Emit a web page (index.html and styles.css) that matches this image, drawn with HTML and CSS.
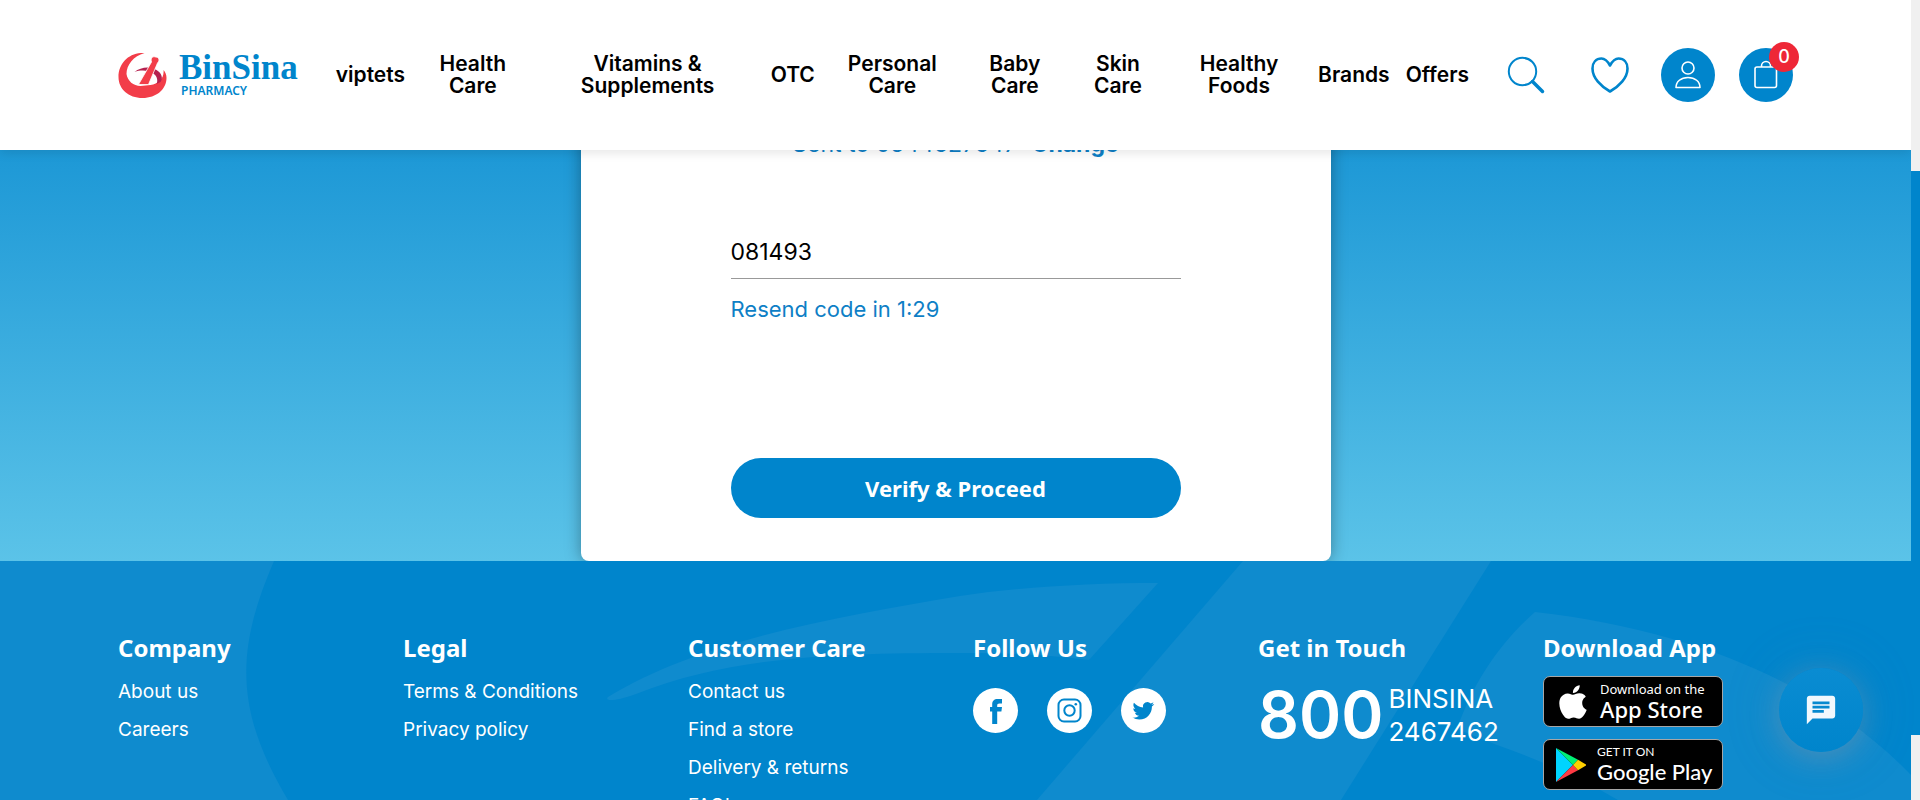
FILE: index.html
```html
<!DOCTYPE html>
<html lang="en">
<head>
<meta charset="utf-8">
<meta name="viewport" content="width=device-width, initial-scale=1">
<title>BinSina Pharmacy</title>
<link rel="stylesheet" href="styles.css">
</head>
<body>
<div class="page">
  <header class="header">
    <a class="logo" href="#">
      <svg class="logo-mark" viewBox="0 0 48 45" aria-hidden="true">
        <path fill="#f23d49" d="M26 0C11-1 0 10 0 24c0 12 10 21 24 21s24-9 24-20c0-3-1-6-3-8 1 8-5 14-13 15l-10 1C15 33 9 28 8 21 8 12 15 3 26 0z"/>
        <path fill="#b5214f" d="M16 19c6-5 16-6 22-2 5 3 7 8 4 12l-4 2c2-4 0-9-4-11-5-3-12-3-18-1z"/>
        <path fill="#f23d49" stroke="#fff" stroke-width=".8" d="M33 9c-1-4 1-6 4-5 3 0 5 3 2 6L30 31.500h-10z"/>
      </svg>
      <span class="logo-text"><span class="logo-name">BinSina</span><span class="logo-sub">PHARMACY</span></span>
    </a>
    <nav class="nav">
      <a href="#">viptets</a>
      <a href="#">Health Care</a>
      <a href="#">Vitamins &amp; Supplements</a>
      <a href="#">OTC</a>
      <a href="#">Personal Care</a>
      <a href="#">Baby Care</a>
      <a href="#">Skin Care</a>
      <a href="#">Healthy Foods</a>
      <a href="#">Brands</a>
      <a href="#">Offers</a>
    </nav>
    <div class="tools">
      <button class="tool tool-search" type="button" aria-label="Search">
        <svg width="38" height="38" viewBox="0 0 38 38" fill="none" stroke="#0085cc"><circle cx="15.500" cy="15.500" r="13.700" stroke-width="2"/><path d="M25.500 25.500L35.500 35.500" stroke-width="3.500" stroke-linecap="round"/></svg>
      </button>
      <button class="tool" type="button" aria-label="Wishlist">
        <svg width="38" height="36" viewBox="0 0 38 36" fill="none" stroke="#0085cc" stroke-width="2.600" stroke-linejoin="round"><path d="M19 8.500C16.500 4 13.500 1.500 10.500 1.500 5 1.500 1.500 5.500 1.500 11.500 1.500 21 10 29.500 19 34.500 28 29.500 36.500 21 36.500 11.500 36.500 5.500 33 1.500 27.500 1.500 24.500 1.500 21.500 4 19 8.500z"/></svg>
      </button>
      <button class="tool tool-round" type="button" aria-label="Account">
        <svg width="28" height="30" viewBox="0 0 28 30" fill="none" stroke="#fff" stroke-width="1.600" stroke-linejoin="round"><circle cx="14" cy="8" r="6"/><path d="M2 27.500C2 21.500 7 17.500 14 17.500S26 21.500 26 27.500z"/></svg>
      </button>
      <button class="tool tool-round" type="button" aria-label="Cart">
        <svg width="28" height="30" viewBox="0 0 28 30" fill="none" stroke="#fff" stroke-width="1.600"><rect x="3" y="7" width="21.500" height="20.500" rx="2"/><path d="M9.500 7V6a4.500 4.500 0 0 1 9 0v1"/></svg>
        <span class="badge">0</span>
      </button>
    </div>
  </header>

  <main class="main">
    <form class="card">
      <p class="sent">Sent to 0544627647 <a href="#">Change</a></p>
      <input class="code" type="text" value="081493" aria-label="Verification code">
      <p class="resend">Resend code in 1:29</p>
      <button class="submit" type="button">Verify &amp; Proceed</button>
    </form>
  </main>

  <footer class="footer">
    <svg class="pattern" viewBox="0 0 1911 239" preserveAspectRatio="none" fill="#0f8bce" aria-hidden="true">
      <path d="M0 0H274C235 90 235 150 288 239H0z"/>
      <path d="M608 136C604 140 614 141 636 133 730 96 830 92 960 92 1010 92 1050 94 1089 99L1158 22C1090 22 1020 26 960 35 830 57 700 80 608 136z"/>
      <path d="M1243 0H1491L1341 239H1037z"/>
      <path d="M1535 51C1500 82 1474 120 1457 168L1497 184C1540 199 1580 217 1618 239H1911V214C1840 140 1720 72 1535 51z"/>
    </svg>
    <div class="columns">
      <section>
        <h2>Company</h2>
        <ul><li><a href="#">About us</a></li><li><a href="#">Careers</a></li></ul>
      </section>
      <section>
        <h2>Legal</h2>
        <ul><li><a href="#">Terms &amp; Conditions</a></li><li><a href="#">Privacy policy</a></li></ul>
      </section>
      <section>
        <h2>Customer Care</h2>
        <ul><li><a href="#">Contact us</a></li><li><a href="#">Find a store</a></li><li><a href="#">Delivery &amp; returns</a></li><li><a href="#">FAQ's</a></li></ul>
      </section>
      <section>
        <h2>Follow Us</h2>
        <div class="social">
          <a href="#" aria-label="Facebook"><svg viewBox="0 0 45 45"><path fill="#0085cc" d="M29 11v4.500h-2.500c-1.800 0-2.300.8-2.300 2.200V19H29l-.6 4.500h-4.200V36h-5V23.500H17V19h2.200v-2.500c0-3.600 1.800-5.500 5.600-5.500z"/></svg></a>
          <a href="#" aria-label="Instagram"><svg viewBox="0 0 45 45" fill="none" stroke="#0085cc" stroke-width="2"><rect x="11.500" y="11.500" width="22" height="22" rx="5.500"/><circle cx="22.500" cy="22.500" r="5.200"/><circle cx="28.800" cy="16.200" r="1.300" fill="#0085cc" stroke="none"/></svg></a>
          <a href="#" aria-label="Twitter"><svg viewBox="0 0 45 45"><path transform="translate(11.500 12) scale(.9)" fill="#0085cc" d="M23.953 4.570a10 10 0 01-2.825.775 4.958 4.958 0 002.163-2.723c-.951.555-2.005.959-3.127 1.184a4.920 4.920 0 00-8.384 4.482C7.690 8.095 4.067 6.130 1.640 3.162a4.822 4.822 0 00-.666 2.475c0 1.710.870 3.213 2.188 4.096a4.904 4.904 0 01-2.228-.616v.060a4.923 4.923 0 003.946 4.827 4.996 4.996 0 01-2.212.085 4.936 4.936 0 004.604 3.417 9.867 9.867 0 01-6.102 2.105c-.390 0-.779-.023-1.170-.067a13.995 13.995 0 007.557 2.209c9.053 0 13.998-7.496 13.998-13.985 0-.210 0-.420-.015-.630A9.935 9.935 0 0024 4.590z"/></svg></a>
        </div>
      </section>
      <section>
        <h2>Get in Touch</h2>
        <a class="phone" href="#"><span class="phone-code">800</span><span class="phone-rest">BINSINA<br>2467462</span></a>
      </section>
      <section>
        <h2>Download App</h2>
        <div class="stores">
          <a class="store store-apple" href="#">
            <svg width="28" height="34" viewBox="2 0 20 24" aria-hidden="true"><path fill="#fff" d="M12.152 6.896c-.948 0-2.415-1.078-3.960-1.040-2.040.027-3.910 1.183-4.961 3.014-2.117 3.675-.546 9.103 1.519 12.090 1.013 1.454 2.208 3.090 3.792 3.039 1.520-.065 2.090-.987 3.935-.987 1.831 0 2.350.987 3.960.948 1.637-.026 2.676-1.480 3.676-2.948 1.156-1.688 1.636-3.325 1.662-3.415-.039-.013-3.182-1.221-3.220-4.857-.026-3.040 2.480-4.494 2.597-4.559-1.429-2.090-3.623-2.324-4.390-2.376-2-.156-3.675 1.090-4.610 1.090zM15.530 3.830c.843-1.012 1.400-2.427 1.245-3.830-1.207.052-2.662.805-3.532 1.818-.780.896-1.454 2.338-1.273 3.714 1.338.104 2.715-.688 3.559-1.701"/></svg>
            <span class="store-text"><small>Download on the</small><b>App Store</b></span>
          </a>
          <a class="store store-google" href="#">
            <svg width="32" height="34" viewBox="0 0 32 34" aria-hidden="true"><path fill="#00d4ff" d="M1 0v34l17-17z"/><path fill="#00f076" d="M1 0l17 17 5-5.200z"/><path fill="#ff3a44" d="M1 34l17-17 5 5.200z"/><path fill="#ffcf00" d="M23 11.800L31 16.500v1l-8 4.700-5-5.200z"/></svg>
            <span class="store-text"><small>GET IT ON</small><b>Google Play</b></span>
          </a>
        </div>
      </section>
    </div>
  </footer>
</div>
<div class="scrollbar" aria-hidden="true"><div class="thumb"></div></div>
<button class="chat" type="button" aria-label="Chat">
  <svg width="34" height="34" viewBox="0 0 24 24" aria-hidden="true"><path fill="#f1f8fd" d="M20 2H4c-1.100 0-1.990.9-1.990 2L2 22l4-4h14c1.100 0 2-.9 2-2V4c0-1.100-.9-2-2-2zM6 9h12v2H6V9zm8 5H6v-2h8v2zm4-6H6V6h12v2z"/></svg>
</button>
</body>
</html>
```

FILE: styles.css
```css
* { box-sizing: border-box; }

body {
  margin: 0;
  display: flex;
  height: 100vh;
  overflow: hidden;
  font-family: Inter, "Liberation Sans", sans-serif;
  color: #000;
}

a { color: inherit; text-decoration: none; }
button { border: 0; padding: 0; background: none; cursor: pointer; font: inherit; }
h2, p, ul { margin: 0; padding: 0; }
ul { list-style: none; }

.page {
  flex: 1;
  min-width: 0;
  display: flex;
  flex-direction: column;
  overflow: hidden;
}

/* Header */
.header {
  position: relative;
  z-index: 2;
  flex: none;
  display: flex;
  align-items: center;
  min-height: 150px;
  padding: 0 118px;
  background: #fff;
  box-shadow: 0 3px 10px rgba(0, 0, 0, .1);
}
.logo { flex: none; display: flex; gap: 12px; align-items: center; margin-right: 38px; color: #0085cc; }
.logo-mark { width: 49px; height: 45px; }
.logo-text { display: flex; flex-direction: column; }
.logo-name { font: bold 35px/32px "Liberation Serif", serif; }
.logo-sub { font: 600 12px/14px "Noto Sans", sans-serif; padding-left: 2px; }

.nav {
  flex: 1;
  min-width: 0;
  display: flex;
  align-items: center;
  gap: 16px;
  font-size: 21px;
  font-weight: 600;
  line-height: 22px;
  text-align: center;
}

.tools { flex: none; display: flex; align-items: center; gap: 24px; margin-left: 24px; }
.tool {
  position: relative;
  width: 54px;
  height: 54px;
  display: flex;
  align-items: center;
  justify-content: center;
}
.tool-search { width: 66px; }
.tool-round { border-radius: 50%; background: #0085cc; }
.badge {
  position: absolute;
  top: -6px;
  right: -6px;
  width: 30px;
  height: 30px;
  border-radius: 50%;
  background: #ee2737;
  color: #fff;
  font-size: 18px;
  font-weight: 500;
  line-height: 30px;
}

/* Verification card */
.main {
  flex: none;
  display: flex;
  justify-content: center;
  background: linear-gradient(#1d98d6, #5bc3e8);
}
.card {
  width: 750px;
  margin-top: -20px;
  padding: 0 150px 43px;
  border-radius: 8px;
  background: #fff;
  box-shadow: 0 0 16px rgba(0, 0, 0, .35);
}
.sent { font-size: 23px; line-height: 28px; text-align: center; color: #0e7fc6; }
.sent a { margin-left: 8px; font-weight: 700; }
.code {
  display: block;
  width: 100%;
  height: 52px;
  margin-top: 69px;
  padding: 0 0 2px;
  border: 0;
  border-bottom: 1px solid #999;
  border-radius: 0;
  outline: 0;
  font: 23px Inter, sans-serif;
  color: #000;
}
.resend { margin-top: 14px; font-size: 22px; line-height: 32px; color: #0e7fc6; }
.submit {
  display: block;
  width: 100%;
  height: 60px;
  margin-top: 133px;
  border-radius: 30px;
  background: #0085cc;
  color: #fff;
  font: 700 22px/60px "Noto Sans", sans-serif;
}

/* Footer */
.footer {
  position: relative;
  z-index: 1;
  flex: 1;
  min-height: 0;
  overflow: hidden;
  background: #0085cc;
  color: #fff;
}
.pattern { position: absolute; inset: 0; width: 100%; height: 100%; }
.columns {
  position: relative;
  display: grid;
  grid-template-columns: repeat(6, 1fr);
  padding: 71px 83px 0 118px;
}
.columns h2 { font: 700 24px/32px "Noto Sans", sans-serif; }
.columns ul { margin-top: 9px; font-size: 19px; line-height: 38px; }

.social { display: flex; gap: 29px; margin-top: 24px; }
.social a { width: 45px; height: 45px; border-radius: 50%; background: #fff; }
.social svg { display: block; }

.phone { display: flex; align-items: center; gap: 5px; margin-top: 18px; }
.phone-code { font-size: 64px; font-weight: 600; line-height: 66px; }
.phone-rest { font-size: 26px; line-height: 33px; }

.stores { display: flex; flex-direction: column; gap: 12px; margin-top: 12px; width: 180px; }
.store {
  display: flex;
  align-items: center;
  height: 51px;
  border: 1px solid #a6a6a6;
  border-radius: 7px;
  background: #000;
}
.store-apple { padding-left: 15px; gap: 13px; font-family: "Noto Sans", sans-serif; }
.store-google { padding-left: 11px; gap: 10px; font-family: Lato, sans-serif; }
.store-text { display: flex; flex-direction: column; }
.store small { font-size: 12px; line-height: 14px; }
.store-apple small { font-size: 13px; }
.store b { font-size: 22px; font-weight: 500; line-height: 26px; }

/* Chat launcher */
.chat {
  position: fixed;
  z-index: 3;
  right: 57px;
  bottom: 48px;
  width: 84px;
  height: 84px;
  display: flex;
  align-items: center;
  justify-content: center;
  border-radius: 50%;
  background: linear-gradient(#0a8cd2, #0085cc);
  box-shadow: 0 6px 30px rgba(220, 150, 130, .26), 0 0 60px rgba(90, 150, 190, .2);
}

/* Scroll track */
.scrollbar { flex: none; width: 9px; padding-top: 171px; background: #f0f0f0; }
.thumb { height: 564px; background: #0085cc; }
```
